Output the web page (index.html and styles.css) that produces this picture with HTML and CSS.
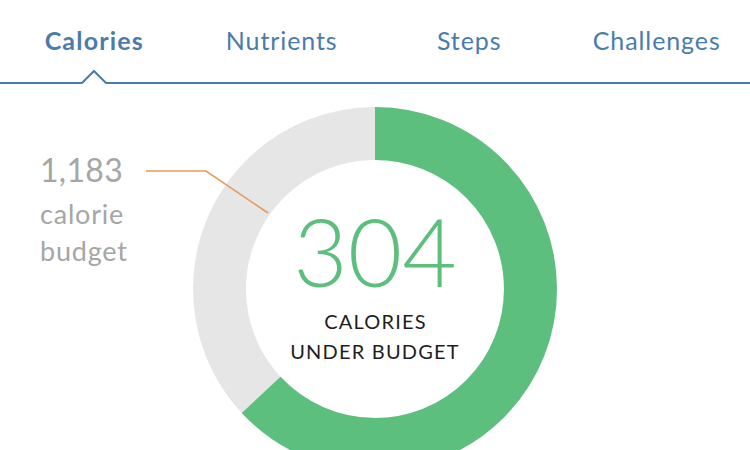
FILE: index.html
```html
<!DOCTYPE html>
<html>
<head>
<meta charset="utf-8">
<link rel="stylesheet" href="styles.css">
</head>
<body>
<nav class="tabs">
  <div class="tab active">Calories
    <svg class="notch" width="24" height="16" viewBox="0 0 24 16"><polygon points="0,15 12,2 24,15" fill="#fff"/><polyline points="0,14 12,2 24,14" fill="none" stroke="#4a7cab" stroke-width="2"/></svg>
  </div>
  <div class="tab">Nutrients</div>
  <div class="tab">Steps</div>
  <div class="tab">Challenges</div>
</nav>
<main class="main">
  <div class="budget">
    <div class="budget-num">1,183</div>
    <div class="budget-text">calorie<br>budget</div>
  </div>
  <div class="chart">
    <svg class="donut" width="364" height="364" viewBox="0 0 364 364">
      <circle cx="182" cy="182" r="155.5" fill="none" stroke="#e6e6e6" stroke-width="53"/>
      <circle cx="182" cy="182" r="155.5" fill="none" stroke="#5dbf7e" stroke-width="53" stroke-dasharray="616 2000" transform="rotate(-90 182 182)"/>
      <polyline points="-47,64 13,64 75,106" fill="none" stroke="#e89a5a" stroke-width="1.6"/>
    </svg>
    <div class="center">
      <div class="big">304</div>
      <div class="sub">CALORIES<br>UNDER BUDGET</div>
    </div>
  </div>
  <div></div>
</main>
</body>
</html>
```

FILE: styles.css
```css
* { box-sizing: border-box; }
html, body { margin: 0; padding: 0; background: #fff; }
body { font-family: Lato, "Open Sans", sans-serif; width: 750px; height: 450px; overflow: hidden; }

.tabs {
  display: flex;
  height: 84px;
  border-bottom: 2px solid #4a7cab;
}
.tab {
  flex: 1;
  position: relative;
  text-align: center;
  padding-top: 25px;
  font-size: 25px;
  line-height: 30px;
  letter-spacing: 0.9px;
  text-indent: 0.9px;
  color: #4a7cab;
}
.tab.active { font-weight: 700; letter-spacing: 1.2px; text-indent: 1.2px; }
.notch {
  position: absolute;
  left: 50%;
  bottom: -3px;
  margin-left: -12px;
  overflow: visible;
}

.main {
  display: grid;
  grid-template-columns: 1fr 364px 1fr;
  padding-top: 23px;
}
.budget {
  padding-top: 41px;
  padding-left: 40px;
  color: #a6a6a6;
}
.budget-num { font-size: 32px; line-height: 44px; letter-spacing: 0.3px; }
.budget-text { font-size: 27px; line-height: 37px; margin-top: 3px; letter-spacing: 0.8px; }

.chart {
  position: relative;
  width: 364px;
  height: 364px;
}
.donut { display: block; overflow: visible; }
.center {
  position: absolute;
  left: 0;
  top: 0;
  width: 100%;
  padding-top: 97px;
  text-align: center;
}
.big {
  font-size: 94px;
  line-height: 94px;
  font-weight: 300;
  color: #5dbf7e;
}
.sub {
  margin-top: 8px;
  font-size: 20px;
  line-height: 30px;
  letter-spacing: 1.2px;
  text-indent: 1.2px;
  color: #1e1e1e;
}
```
